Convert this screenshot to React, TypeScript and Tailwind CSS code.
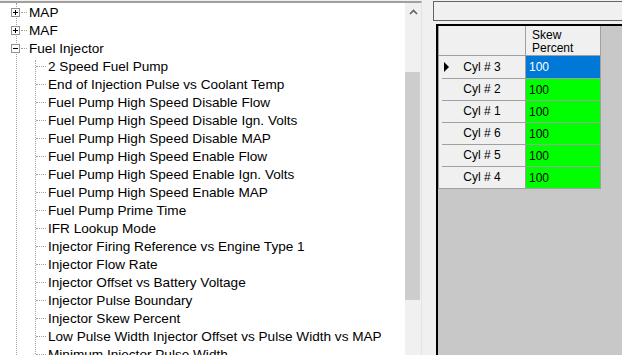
import React from 'react'

const tree: { label: string; level: number; box?: '+' | '-' }[] = [
  { label: 'MAP', level: 0, box: '+' },
  { label: 'MAF', level: 0, box: '+' },
  { label: 'Fuel Injector', level: 0, box: '-' },
  { label: '2 Speed Fuel Pump', level: 1 },
  { label: 'End of Injection Pulse vs Coolant Temp', level: 1 },
  { label: 'Fuel Pump High Speed Disable Flow', level: 1 },
  { label: 'Fuel Pump High Speed Disable Ign. Volts', level: 1 },
  { label: 'Fuel Pump High Speed Disable MAP', level: 1 },
  { label: 'Fuel Pump High Speed Enable Flow', level: 1 },
  { label: 'Fuel Pump High Speed Enable Ign. Volts', level: 1 },
  { label: 'Fuel Pump High Speed Enable MAP', level: 1 },
  { label: 'Fuel Pump Prime Time', level: 1 },
  { label: 'IFR Lookup Mode', level: 1 },
  { label: 'Injector Firing Reference vs Engine Type 1', level: 1 },
  { label: 'Injector Flow Rate', level: 1 },
  { label: 'Injector Offset vs Battery Voltage', level: 1 },
  { label: 'Injector Pulse Boundary', level: 1 },
  { label: 'Injector Skew Percent', level: 1 },
  { label: 'Low Pulse Width Injector Offset vs Pulse Width vs MAP', level: 1 },
  { label: 'Minimum Injector Pulse Width', level: 1 },
]

const cyls = ['3', '2', '1', '6', '5', '4']

const dotsV = 'border-l border-dotted border-[#a0a0a0]'
const dotsH = 'border-t border-dotted border-[#a0a0a0]'

const TreeRow = ({ label, level, box }: { label: string; level: number; box?: '+' | '-' }) => (
  <div className="relative flex h-[18px] items-center">
    {level === 0 ? (
      <>
        <div className="absolute left-[11px] top-[5px] flex h-[9px] w-[9px] items-center justify-center border border-[#919191] bg-white">
          <div className="absolute h-px w-[5px] bg-black" />
          {box === '+' && <div className="absolute h-[5px] w-px bg-black" />}
        </div>
        <div className={`absolute left-[21px] top-[9px] w-[6px] ${dotsH}`} />
        <span className="ml-[29px] pt-[2px] whitespace-nowrap">{label}</span>
      </>
    ) : (
      <>
        <div className={`absolute left-[36px] top-[9px] w-[10px] ${dotsH}`} />
        <span className="ml-[48px] pt-[2px] whitespace-nowrap">{label}</span>
      </>
    )}
  </div>
)

export default function App() {
  return (
    <div
      className="flex h-[355px] w-[622px] overflow-hidden bg-[#f0f0f0] text-black"
      style={{ fontFamily: '"Liberation Sans", Arial, sans-serif' }}
    >
      {/* tree view */}
      <div className="mt-px flex w-[422px] shrink-0 border-t-2 border-r border-t-[#a0a0a0] border-r-[#e3e3e3]">
        <div className="relative flex-1 overflow-hidden bg-white text-[13.6px]">
          <div className={`absolute left-[16px] top-0 h-full ${dotsV}`} />
          <div className={`absolute left-[35px] top-[57px] h-full ${dotsV}`} />
          {tree.map((t) => (
            <TreeRow key={t.label} {...t} />
          ))}
        </div>
        <div className="flex w-[16px] flex-col bg-[#f0f0f0]">
          <div className="flex h-[17px] items-center justify-center">
            <svg width="9" height="6" viewBox="0 0 9 6">
              <path d="M1 5 L4.5 1.5 L8 5" stroke="#606060" strokeWidth="1.6" fill="none" />
            </svg>
          </div>
          <div className="mt-[52px] h-[228px] w-[15px] bg-[#cdcdcd]" />
        </div>
      </div>

      {/* right side */}
      <div className="flex flex-1 flex-col">
        <div className="ml-[11px] mt-px h-[20px] border border-r-0 border-[#646464] bg-[#f0f0f0]" />
        <div className="ml-[14px] mt-[3px] flex-1 border-l-2 border-t-2 border-black bg-[#c8c8c8] text-[12px]">
          <div className="flex w-[163px] flex-col border-l border-b border-[#a0a0a0]">
            <div className="flex h-[30px]">
              <div className="w-[87px] border-r border-b border-[#a0a0a0] bg-[#f0f0f0]" />
              <div className="w-[75px] border-r border-b border-[#a0a0a0] bg-[#f0f0f0] pl-[6px] pt-[3px] leading-[13px]">
                Skew
                <br />
                Percent
              </div>
            </div>
            {cyls.map((c, i) => (
              <div key={c} className="flex h-[22px]">
                <div className="relative flex w-[87px] items-center justify-center border-r border-[#a0a0a0] bg-[#f0f0f0]">
                  {i > 0 && <div className="absolute left-[3px] right-0 top-0 h-px bg-[#a0a0a0]" />}
                  {i === 0 && (
                    <svg className="absolute left-[5px] top-[6px]" width="6" height="10" viewBox="0 0 6 10">
                      <path d="M0 0 L5 5 L0 10 Z" fill="#000" />
                    </svg>
                  )}
                  <span>Cyl # {c}</span>
                </div>
                <div
                  className={`flex w-[75px] items-center border-r border-[#a0a0a0] pl-[3px] ${
                    i === 0 ? 'bg-[#0078d7] text-white' : 'border-t bg-[#00ff00] text-black'
                  }`}
                >
                  100
                </div>
              </div>
            ))}
          </div>
        </div>
      </div>
    </div>
  )
}
